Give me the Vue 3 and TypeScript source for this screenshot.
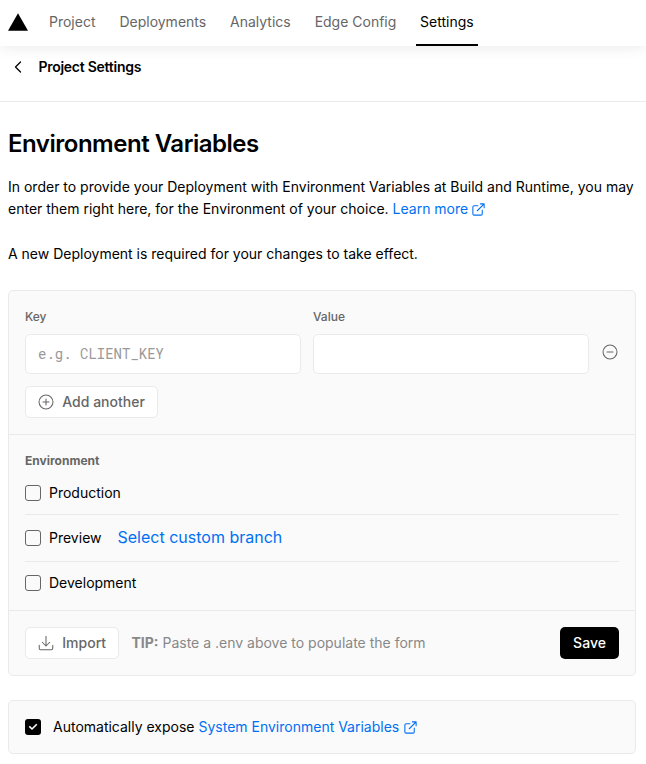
<script setup lang="ts">
import { ref } from 'vue'

interface EnvironmentOption {
  name: string
  checked: boolean
  branchLink?: string
}

const tabs: string[] = ['Project', 'Deployments', 'Analytics', 'Edge Config', 'Settings']
const activeTab = ref('Settings')
const envKey = ref('')
const envValue = ref('')
const exposeSystem = ref(true)

const environments = ref<EnvironmentOption[]>([
  { name: 'Production', checked: false },
  { name: 'Preview', checked: false, branchLink: 'Select custom branch' },
  { name: 'Development', checked: false },
])
</script>

<template>
  <div class="page">
    <header class="topbar">
      <svg class="logo" width="20" height="18" viewBox="0 0 20 18"><path d="M10 0.2 20 17.8H0Z" fill="#000" /></svg>
      <nav class="tabs">
        <a v-for="tab in tabs" :key="tab" class="tab" :class="{ active: tab === activeTab }" @click="activeTab = tab">{{ tab }}</a>
      </nav>
    </header>

    <div class="subnav">
      <svg class="back" width="20" height="20" viewBox="0 0 24 24" fill="none" stroke="#000" stroke-width="1.5" stroke-linecap="round" stroke-linejoin="round"><path d="M15 18l-6-6 6-6" /></svg>
      <span>Project Settings</span>
    </div>

    <main class="content">
      <h1>Environment Variables</h1>
      <p class="intro">
        <span>In order to provide your Deployment with Environment Variables at Build and Runtime, you may</span><br />
        <span>enter them right here, for the Environment of your choice.</span>
        <a class="link">Learn more <svg class="external" viewBox="0 0 24 24"><path d="M18 13v6a2 2 0 01-2 2H5a2 2 0 01-2-2V8a2 2 0 012-2h6M15 3h6v6M10 14L21 3" /></svg></a>
      </p>
      <p class="note">A new Deployment is required for your changes to take effect.</p>

      <section class="card">
        <div class="variables">
          <div class="fields">
            <label class="field">
              <span>Key</span>
              <input v-model="envKey" type="text" placeholder="e.g. CLIENT_KEY" />
            </label>
            <label class="field">
              <span>Value</span>
              <input v-model="envValue" type="text" />
            </label>
            <button class="remove" aria-label="Remove">
              <svg width="18" height="18" viewBox="0 0 24 24" class="icon"><circle cx="12" cy="12" r="9.3" /><path d="M8 12h8" /></svg>
            </button>
          </div>
          <button class="button">
            <svg width="18" height="18" viewBox="0 0 24 24" class="icon"><circle cx="12" cy="12" r="9.3" /><path d="M12 8v8M8 12h8" /></svg>
            <span>Add another</span>
          </button>
        </div>

        <div class="environments">
          <h2>Environment</h2>
          <div v-for="env in environments" :key="env.name" class="environment">
            <label class="option"><input v-model="env.checked" type="checkbox" class="box" /><span>{{ env.name }}</span></label>
            <a v-if="env.branchLink" class="branch">{{ env.branchLink }}</a>
          </div>
        </div>

        <footer class="actions">
          <button class="button">
            <svg width="18" height="18" viewBox="0 0 24 24" class="icon"><path d="M21 15v4a2 2 0 01-2 2H5a2 2 0 01-2-2v-4M7 11l5 5 5-5M12 16V3" /></svg>
            <span>Import</span>
          </button>
          <span class="tip"><b>TIP:</b> Paste a .env above to populate the form</span>
          <button class="save">Save</button>
        </footer>
      </section>

      <section class="card system">
        <button class="check" role="checkbox" :aria-checked="exposeSystem" @click="exposeSystem = !exposeSystem">
          <svg v-if="exposeSystem" width="16" height="16" viewBox="0 0 16 16" fill="none" stroke="#fff" stroke-width="1.6"><path d="M11.8 5.2 7 10 4.3 7.4" /></svg>
        </button>
        <span class="expose">Automatically expose <a class="link">System Environment Variables <svg class="external" viewBox="0 0 24 24"><path d="M18 13v6a2 2 0 01-2 2H5a2 2 0 01-2-2V8a2 2 0 012-2h6M15 3h6v6M10 14L21 3" /></svg></a></span>
      </section>
    </main>
  </div>
</template>

<style>
body {
  background: #fff;
}
</style>

<style scoped>
.page,
.page * {
  box-sizing: border-box;
}

.page {
  font-family: Inter, 'Liberation Sans', sans-serif;
  font-size: 14px;
  color: #000;
  min-height: 764px;
}

.topbar {
  display: flex;
  align-items: center;
  height: 46px;
  padding-left: 8px;
  position: relative;
  background: #fff;
  box-shadow: 0 0 15px rgba(0, 0, 0, 0.1);
}

.logo {
  margin-top: -2px;
}

.tabs {
  display: flex;
  gap: 17.9px;
  height: 46px;
  margin-left: 18px;
}

.tab {
  padding: 0 3px;
  line-height: 44px;
  color: #666;
  border-bottom: 2px solid transparent;
}

.tab.active {
  margin-left: -0.8px;
  padding: 0 4px 0 3.6px;
  color: #000;
  border-color: #000;
}

.subnav {
  display: flex;
  align-items: center;
  gap: 10.4px;
  height: 56px;
  padding: 0 8px 13px;
  border-bottom: 1px solid #eaeaea;
  font-weight: 600;
  letter-spacing: -0.26px;
}

.subnav span {
  padding-bottom: 1px;
}

.content {
  padding: 24px 10px 10px 8px;
}

h1 {
  margin: 0;
  font-size: 24px;
  line-height: 36px;
  font-weight: 600;
  letter-spacing: -0.48px;
}

.intro,
.note {
  margin: 14px 0 0;
  line-height: 22.4px;
}

.intro {
  white-space: nowrap;
}

.intro .link {
  margin-left: 4px;
}

.note {
  margin-top: 22px;
}

.link,
.branch {
  color: #0070f3;
}

.external {
  width: 15px;
  height: 15px;
  margin-left: -0.8px;
  vertical-align: -3px;
  fill: none;
  stroke: currentColor;
  stroke-width: 1.7;
  stroke-linecap: round;
  stroke-linejoin: round;
}

.expose .external {
  margin-left: -0.3px;
}

.card {
  margin-top: 25px;
  border: 1px solid #eaeaea;
  border-radius: 5px;
  background: #fafafa;
}

.variables {
  height: 144px;
  padding: 16px 16px 0;
  border-bottom: 1px solid #eaeaea;
}

.fields {
  display: grid;
  grid-template-columns: 276px 276px 18px;
  gap: 12px;
  margin-bottom: 12px;
}

.field {
  display: flex;
  flex-direction: column;
  gap: 7px;
  font-size: 12px;
  line-height: 20px;
  font-weight: 500;
  color: #666;
}

.field input {
  width: 100%;
  height: 40px;
  padding: 0 12px 2px;
  border: 1px solid #eaeaea;
  border-radius: 5px;
  background: #fff;
  outline: none;
  font-family: 'Roboto Mono', 'Liberation Mono', monospace;
  font-size: 14px;
}

.field input::placeholder {
  color: #999;
}

.remove {
  display: flex;
  align-self: end;
  padding: 0;
  margin: 0 0 13px;
  border: 0;
  background: none;
  color: #666;
}

.icon {
  fill: none;
  stroke: currentColor;
  stroke-width: 1.4;
  stroke-linecap: round;
  stroke-linejoin: round;
}

.button {
  display: flex;
  align-items: center;
  gap: 7.3px;
  height: 32px;
  padding: 0 12px 0 11px;
  border: 1px solid #eaeaea;
  border-radius: 5px;
  background: #fff;
  color: #666;
  font: 500 14px Inter, sans-serif;
}

.button span {
  padding-bottom: 1px;
}

.environments {
  height: 176px;
  padding: 16px 16px 0;
  border-bottom: 1px solid #eaeaea;
}

h2 {
  margin: 0;
  font-size: 12px;
  line-height: 20px;
  font-weight: 700;
  color: #666;
}

.environment {
  display: flex;
  align-items: center;
  height: 47px;
  gap: 16px;
  padding-bottom: 1px;
  border-bottom: 1px solid #eaeaea;
}

.environment:nth-of-type(1) {
  height: 44px;
  padding-bottom: 0;
}

.environment:last-child {
  height: 43px;
  border: 0;
}

.environment:last-child .option span {
  padding-bottom: 1px;
}

.option {
  display: flex;
  align-items: center;
  gap: 8px;
}

.box {
  appearance: none;
  width: 16px;
  height: 16px;
  margin: 0;
  border: 1px solid #666;
  border-radius: 3px;
  background: #fafafa;
}

.box:checked {
  background: #000;
}

.branch {
  padding-bottom: 1px;
  font-size: 16px;
}

.actions {
  display: flex;
  align-items: center;
  height: 64px;
  padding: 0 16px;
}

.tip {
  margin-left: 12.4px;
  padding-bottom: 1px;
  color: #888;
}

.save {
  margin-left: auto;
  width: 59px;
  height: 32px;
  padding: 0 0 1px;
  border: 0;
  border-radius: 5px;
  background: #000;
  color: #fff;
  font: 500 14px Inter, sans-serif;
}

.card.system {
  display: flex;
  align-items: center;
  gap: 12px;
  height: 54px;
  margin-top: 24px;
  padding: 0 16px;
}

.expose {
  padding-bottom: 1px;
}

.check {
  width: 16px;
  height: 16px;
  display: flex;
  padding: 0;
  border: 0;
  border-radius: 3px;
  background: #000;
}
</style>
